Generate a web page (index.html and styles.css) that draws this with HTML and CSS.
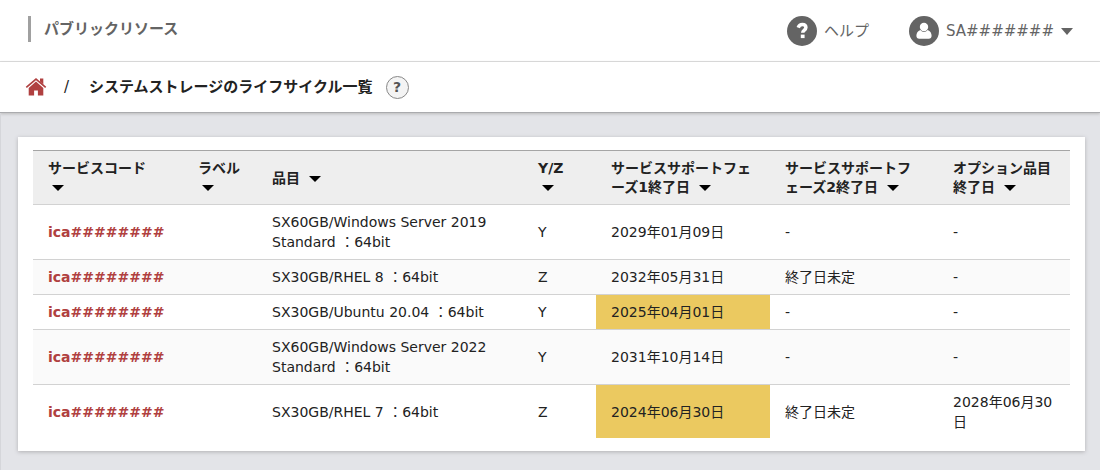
FILE: index.html
```html
<!DOCTYPE html>
<html lang="ja">
<head>
<meta charset="utf-8">
<meta name="viewport" content="width=device-width, initial-scale=1">
<title>システムストレージのライフサイクル一覧</title>
<link rel="stylesheet" href="styles.css">
</head>
<body>
<header class="topbar">
  <div class="topbar-title">パブリックリソース</div>
  <nav class="topbar-nav">
    <a class="nav-item" href="#help">
      <svg class="round-icon" viewBox="0 0 30 30" aria-hidden="true"><circle cx="15" cy="15" r="15" fill="#646464"/><path d="M11.200 11.600C12.200 9.200 13.600 8.500 15.300 8.500c2.100 0 3.600 1.200 3.600 3 0 2.600-3.200 2.500-3.200 5.300" fill="none" stroke="#fff" stroke-width="3.500"/><path d="M13.800 18.600h3.800v3.500h-3.800z" fill="#fff"/></svg>
      <span>ヘルプ</span>
    </a>
    <button class="nav-item" type="button">
      <svg class="round-icon" viewBox="0 0 30 30" aria-hidden="true"><circle cx="15" cy="15" r="15" fill="#646464"/><path d="M11.400 14c-2.800.8-4 3.300-4 5.700 0 1.900 1.100 3 2.800 3h9.600c1.700 0 2.800-1.100 2.800-3 0-2.400-1.200-4.900-4-5.700-1 1.300-2.200 1.900-3.600 1.900s-2.600-.6-3.600-1.900z" fill="#fff"/><circle cx="15" cy="11" r="4.200" fill="#fff"/></svg>
      <span>SA#######</span>
      <svg class="caret" viewBox="0 0 12 7" aria-hidden="true"><path d="M0 0h12L6 7z" fill="#646464"/></svg>
    </button>
  </nav>
</header>
<div class="crumbs">
  <a class="home" href="#home" aria-label="ホーム"><svg viewBox="0 0 21 18" aria-hidden="true"><path d="M10.500 3.400 17.800 10v7.600h-5.400v-5.100H8.600v5.100H3.200V10z" fill="#b04040"/><path d="M.8 9.300 10.500 1.200l9.700 8.100" fill="none" stroke="#b04040" stroke-width="1.700"/><path d="M14.500.6h3.300v5.800l-3.300-2.800z" fill="#b04040"/></svg></a>
  <span class="slash">/</span>
  <h1 class="page-title">システムストレージのライフサイクル一覧</h1>
  <button class="hint" type="button" aria-label="ヘルプ">?</button>
</div>
<main class="content">
  <section class="card">
    <table class="list">
      <colgroup><col class="c-code"><col class="c-label"><col><col class="c-yz"><col class="c-p1"><col class="c-p2"><col class="c-opt"></colgroup>
      <thead>
        <tr>
          <th>サービスコード <button class="sort" type="button" aria-label="並べ替え"></button></th>
          <th>ラベル <button class="sort" type="button" aria-label="並べ替え"></button></th>
          <th>品目 <button class="sort" type="button" aria-label="並べ替え"></button></th>
          <th>Y/Z <button class="sort" type="button" aria-label="並べ替え"></button></th>
          <th>サービスサポートフェーズ1終了日 <button class="sort" type="button" aria-label="並べ替え"></button></th>
          <th>サービスサポートフェーズ2終了日 <button class="sort" type="button" aria-label="並べ替え"></button></th>
          <th>オプション品目終了日 <button class="sort" type="button" aria-label="並べ替え"></button></th>
        </tr>
      </thead>
      <tbody>
        <tr><td><a href="#1">ica########</a></td><td></td><td>SX60GB/Windows Server 2019 Standard ：64bit</td><td>Y</td><td>2029年01月09日</td><td>-</td><td>-</td></tr>
        <tr><td><a href="#2">ica########</a></td><td></td><td>SX30GB/RHEL 8 ：64bit</td><td>Z</td><td>2032年05月31日</td><td>終了日未定</td><td>-</td></tr>
        <tr><td><a href="#3">ica########</a></td><td></td><td>SX30GB/Ubuntu 20.04 ：64bit</td><td>Y</td><td class="warn">2025年04月01日</td><td>-</td><td>-</td></tr>
        <tr><td><a href="#4">ica########</a></td><td></td><td>SX60GB/Windows Server 2022 Standard ：64bit</td><td>Y</td><td>2031年10月14日</td><td>-</td><td>-</td></tr>
        <tr><td><a href="#5">ica########</a></td><td></td><td>SX30GB/RHEL 7 ：64bit</td><td>Z</td><td class="warn">2024年06月30日</td><td>終了日未定</td><td>2028年06月30日</td></tr>
      </tbody>
    </table>
  </section>
</main>
</body>
</html>
```
FILE: styles.css
```css
* { box-sizing: border-box; }
body {
  margin: 0;
  min-height: 100vh;
  display: flex;
  flex-direction: column;
  font: 14px/20px Verdana, "DejaVu Sans", "Noto Sans CJK JP", sans-serif;
  color: #222;
  background: #e3e4e8;
}
button { font: inherit; color: inherit; background: none; border: 0; padding: 0; cursor: pointer; }
a { text-decoration: none; }

.topbar {
  display: flex;
  align-items: center;
  justify-content: space-between;
  min-height: 62px;
  padding: 0 27px 0 28px;
  background: #fff;
  border-bottom: 1px solid #ddd;
  font-size: 15px;
  color: #646464;
}
.topbar-title {
  padding: 3px 0 3px 13px;
  margin-bottom: 3px;
  border-left: 3px solid #a0a0a0;
  font-weight: bold;
}
.topbar-nav { display: flex; gap: 40px; padding-top: 1px; }
.nav-item { display: flex; align-items: center; gap: 7px; color: inherit; }
.round-icon { width: 30px; height: 30px; }
.caret { width: 12px; height: 7px; }

.crumbs {
  display: flex;
  align-items: center;
  min-height: 51px;
  padding: 0 25px;
  background: #fff;
  border-bottom: 1px solid #aaabae;
  box-shadow: 0 1px 3px #bbb;
  font-size: 15px;
}
.home { display: flex; width: 22px; }
.home svg { width: 22px; height: 18px; }
.slash { margin: 0 20px 0 17px; }
.page-title { margin: 0; font-size: 15px; font-weight: bold; }
.hint {
  width: 23px;
  height: 23px;
  margin-left: 13px;
  border: 1px solid #888;
  border-radius: 50%;
  background: #f4f4f4;
  color: #555;
  font-size: 14px;
  font-weight: bold;
  line-height: 20px;
}

.content {
  flex: 1;
  padding: 24px 15px 18px 17px;
  border-left: 1px solid #d5d6da;
}
.card {
  padding: 13px 15px;
  background: #fff;
  box-shadow: 0 1px 4px #b0b0b3;
}
.list { width: 100%; table-layout: fixed; border-collapse: separate; border-spacing: 0; }
.c-code { width: 150px; }
.c-label { width: 74px; }
.c-yz { width: 73px; }
.c-p1 { width: 174px; }
.c-p2 { width: 168px; }
.c-opt { width: 132px; }
.list th, .list td {
  padding: 7px 15px;
  text-align: left;
  vertical-align: middle;
  border-bottom: 1px solid #d2d2d2;
}
.list th {
  padding-top: 8px;
  line-height: 19px;
  background: #eee;
  border-top: 1px solid #a5a5a5;
}
.list a { color: #b04040; font-weight: bold; }
.list tbody tr:nth-child(even) { background: #fafafa; }
.list tbody tr:last-child td { padding-bottom: 6px; border-bottom: 0; }
.list .warn { background: #ebc960; }
.sort {
  display: inline-block;
  margin: 0 5px 0 4px;
  border: solid transparent;
  border-width: 6px 6px 0;
  border-top-color: #000;
  vertical-align: 1px;
}
```
